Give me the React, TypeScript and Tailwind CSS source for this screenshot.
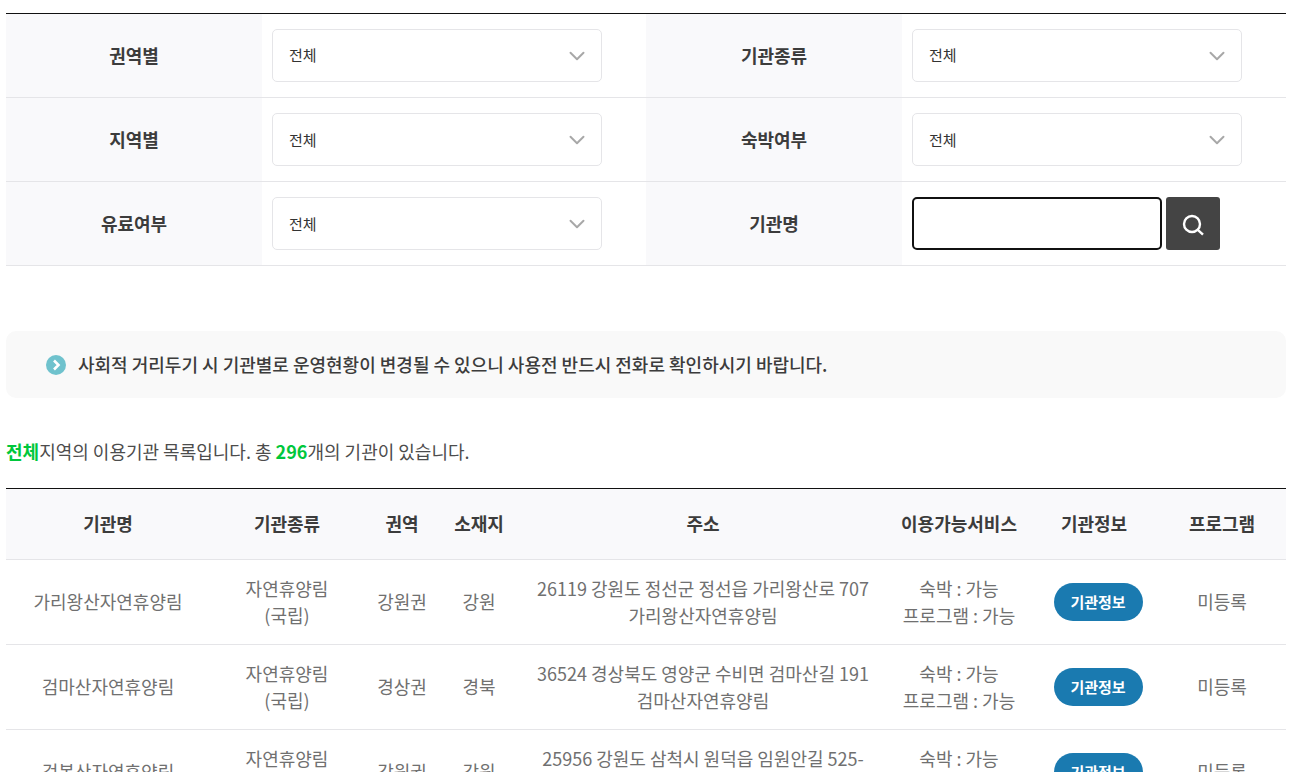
import { ChevronDown } from "lucide-react";

const font = { fontFamily: '"Noto Sans CJK KR", "Noto Sans", sans-serif' };

const Label = ({ text }: { text: string }) => (
    <div className="flex items-center justify-center bg-[#f9f9fb] text-[18px] font-bold text-[#3c3c3c]">{text}</div>
);

const Select = ({ low = false }: { low?: boolean }) => (
    <div className="flex items-center bg-white pl-[10px]">
        <div className="flex h-[53px] w-[330px] items-center justify-between rounded-[5px] border border-[#e5e5e8] pl-4 pr-[11px] text-[15px] text-[#333]">
            <span className={low ? "pt-[2px]" : ""}>전체</span>
            <ChevronDown size={26} strokeWidth={1.8} color="#a8a8a8" />
        </div>
    </div>
);

const filterRow = "grid h-[84px] grid-cols-[256px_384px_256px_384px] border-b border-[#e5e5e8]";

const rows = [
    {
        name: "가리왕산자연휴양림",
        kind: ["자연휴양림", "(국립)"],
        area: "강원권",
        loc: "강원",
        addr: ["26119 강원도 정선군 정선읍 가리왕산로 707", "가리왕산자연휴양림"],
    },
    {
        name: "검마산자연휴양림",
        kind: ["자연휴양림", "(국립)"],
        area: "경상권",
        loc: "경북",
        addr: ["36524 경상북도 영양군 수비면 검마산길 191", "검마산자연휴양림"],
    },
    {
        name: "검봉산자연휴양림",
        kind: ["자연휴양림", "(국립)"],
        area: "강원권",
        loc: "강원",
        addr: ["25956 강원도 삼척시 원덕읍 임원안길 525-", "61 검봉산자연휴양림"],
    },
];

const headers = ["기관명", "기관종류", "권역", "소재지", "주소", "이용가능서비스", "기관정보", "프로그램"];
const columns = "grid grid-cols-[204px_154px_76px_78px_370px_142px_128px_128px]";

export default function App() {
    return (
        <div className="h-screen overflow-hidden bg-white pl-[6px] pt-[13px]" style={font}>
            <div className="w-[1280px]">
                <div className="border-t border-[#111]">
                    <div className={filterRow}>
                        <Label text="권역별" />
                        <Select />
                        <Label text="기관종류" />
                        <Select />
                    </div>
                    <div className={filterRow}>
                        <Label text="지역별" />
                        <Select low />
                        <Label text="숙박여부" />
                        <Select low />
                    </div>
                    <div className={filterRow}>
                        <Label text="유료여부" />
                        <Select low />
                        <Label text="기관명" />
                        <div className="flex items-center gap-1 pl-[10px]">
                            <div className="h-[53px] w-[250px] rounded-[5px] border-2 border-[#111] bg-white" />
                            <button className="flex h-[53px] w-[54px] items-center justify-center rounded-[3px] bg-[#444]">
                                <svg width="24" height="24" viewBox="0 0 24 24" fill="none" stroke="#fff" strokeWidth="2.4">
                                    <circle cx="11" cy="12" r="8" />
                                    <path d="M16.8 17.8 22 22.6" />
                                </svg>
                            </button>
                        </div>
                    </div>
                </div>

                <div className="mt-[65px] flex h-[67px] items-center gap-[12px] rounded-[10px] bg-[#f9f9f9] pl-10 text-[18px] font-medium text-[#3c3c3c]">
                    <svg width="20" height="20" viewBox="0 0 20 20">
                        <circle cx="10" cy="10" r="10" fill="#6fc2cd" />
                        <path d="M8 5.5 12.5 10 8 14.5" fill="none" stroke="#fff" strokeWidth="2.6" />
                    </svg>
                    <span>사회적 거리두기 시 기관별로 운영현황이 변경될 수 있으니 사용전 반드시 전화로 확인하시기 바랍니다.</span>
                </div>

                <p className="mt-[40px] mb-[24px] text-[18px] leading-[26px] text-[#4c4c4c]">
                    <b className="text-[#00c73c]">전체</b>지역의 이용기관 목록입니다. 총 <b className="text-[#00c73c]">296</b>개의 기관이 있습니다.
                </p>

                <div className="border-t border-[#111]">
                    <div className={`${columns} h-[71px] items-center border-b border-[#e5e5e8] bg-[#f9f9fb] pb-[2px] text-center text-[18px] font-bold text-[#3c3c3c]`}>
                        {headers.map((header) => (
                            <div key={header}>{header}</div>
                        ))}
                    </div>
                    {rows.map((row) => (
                        <div
                            key={row.name}
                            className={`${columns} h-[85px] items-center border-b border-[#e5e5e8] text-center text-[18px] leading-[27px] text-[#707070]`}
                        >
                            <div className="pb-[2px]">{row.name}</div>
                            <div>
                                {row.kind.map((line) => (
                                    <div key={line}>{line}</div>
                                ))}
                            </div>
                            <div className="pb-[2px]">{row.area}</div>
                            <div className="pb-[2px]">{row.loc}</div>
                            <div>
                                {row.addr.map((line) => (
                                    <div key={line}>{line}</div>
                                ))}
                            </div>
                            <div>
                                <div>숙박 : 가능</div>
                                <div>프로그램 : 가능</div>
                            </div>
                            <div className="flex justify-center pl-2">
                                <span className="flex h-[38px] w-[89px] items-center justify-center rounded-full bg-[#1a7ab0] pb-[2px] text-[15px] font-bold text-white">
                                    기관정보
                                </span>
                            </div>
                            <div className="pb-[2px]">미등록</div>
                        </div>
                    ))}
                </div>
            </div>
        </div>
    );
}
